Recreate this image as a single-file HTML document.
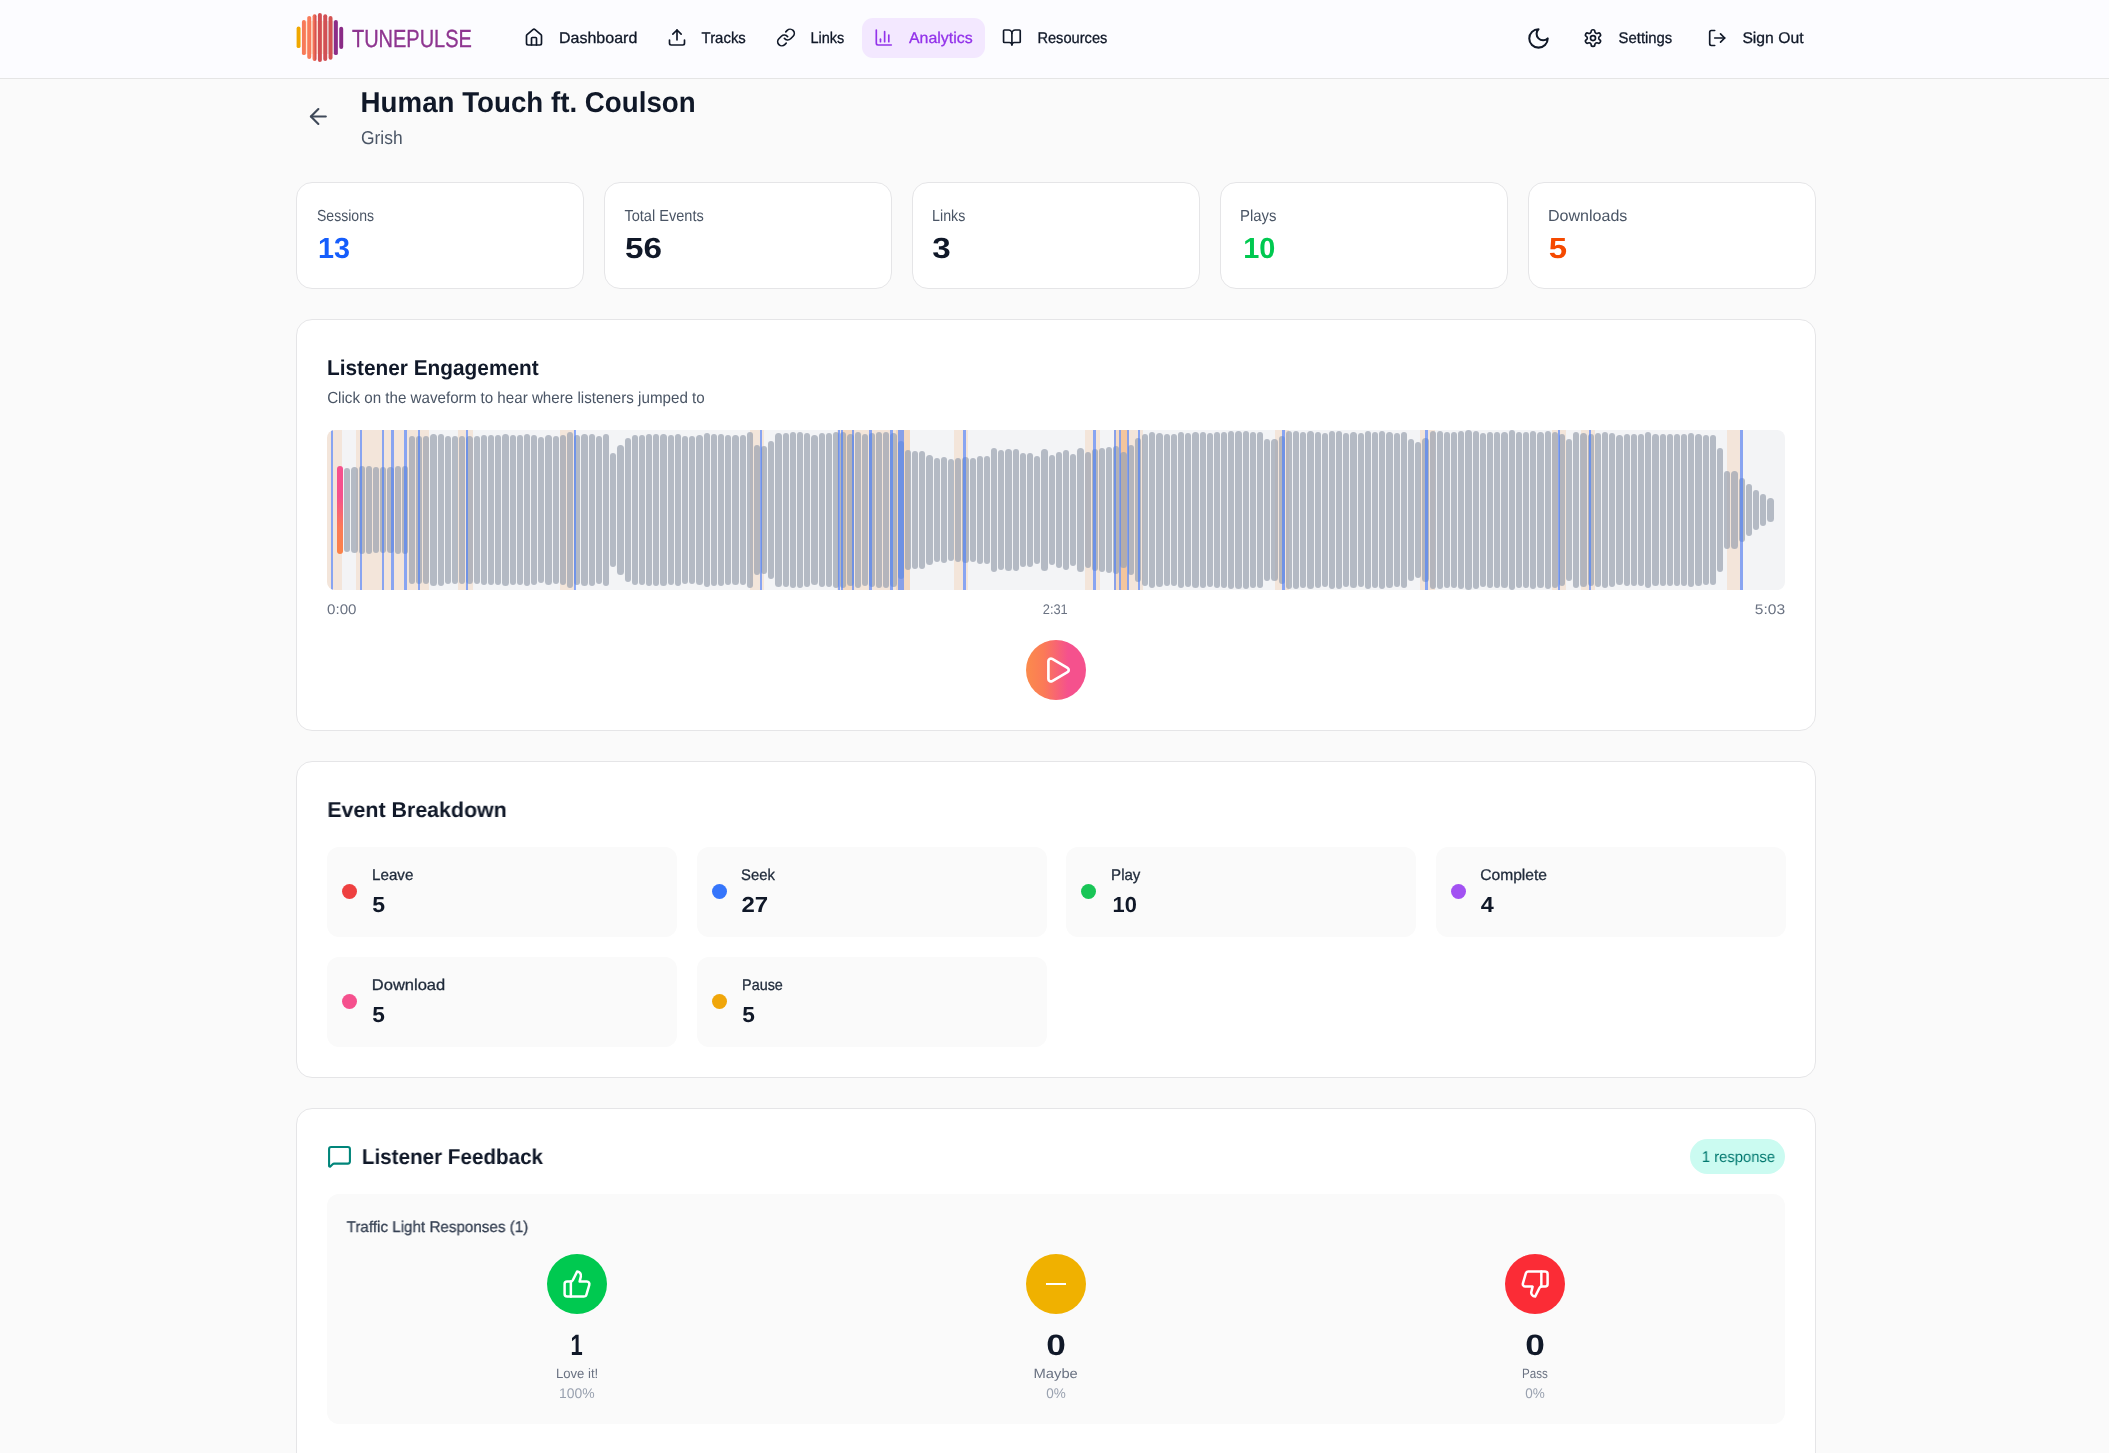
<!DOCTYPE html>
<html lang="en"><head><meta charset="utf-8"><title>TunePulse Analytics</title>
<style>
*{box-sizing:border-box;margin:0;padding:0}
html,body{width:2109px;height:1453px;overflow:hidden;background:#fafafa;font-family:"Liberation Sans",sans-serif}
.page{position:relative;width:2109px;height:1453px;overflow:hidden;will-change:transform}
.hdr{position:absolute;left:0;top:0;width:2109px;height:79px;background:#fcfcff;border-bottom:1px solid #e5e5e5}
.t{position:absolute;line-height:1;white-space:nowrap;text-rendering:geometricPrecision}
.ic{position:absolute;overflow:visible}

.pill{position:absolute;left:862px;top:18px;width:123px;height:40px;border-radius:11px;background:#f3e8ff}
.card{position:absolute;background:#fff;border:1px solid #e5e5e7;border-radius:16px}
.tile{position:absolute;background:#fafafa;border-radius:12px}
.dot{position:absolute;width:15px;height:15px;border-radius:50%}
.circ{position:absolute;width:60px;height:60px;border-radius:50%}
.wave{position:absolute;left:327px;top:430px;width:1458px;height:160px;background:#f3f4f6;border-radius:8px;overflow:hidden}
.bars{position:absolute;left:10px;top:0;width:1438px;height:160px;display:flex;align-items:center;gap:1px}
.bars b{flex:1;display:block;background:rgba(153,161,175,.7);border-radius:4px}
.bars b.p{background:linear-gradient(to top,#fb8248 0%,#fb7a57 30%,#f5518d 65%,#f5518d 100%)}
.wave u{position:absolute;top:0;height:160px;background:rgba(251,146,60,.15)}
.wave s{position:absolute;top:0;height:160px;background:rgba(70,125,255,.62)}
.playbtn{position:absolute;left:1026px;top:640px;width:60px;height:60px;border-radius:50%;background:linear-gradient(90deg,#fb8b4c 0%,#fb7a57 30%,#f5518d 70%,#f5518d 100%)}
.badge{position:absolute;left:1690px;top:1139px;width:95px;height:35px;border-radius:17.5px;background:#cbfbf1}
</style></head>
<body><div class="page">
<div class="hdr"></div>
<svg class="ic" style="left:290px;top:8px;width:60px;height:60px" viewBox="290 8 60 60"><defs><linearGradient id="lg4" x1="0" x2="1" y1="0" y2="0"><stop offset="0.35" stop-color="#f47558"/><stop offset="0.65" stop-color="#d65252"/></linearGradient></defs><rect x="304.5" y="21" width="25" height="33" rx="3" fill="#fde9d8"/><rect x="326.5" y="21" width="8.5" height="33" fill="#e6dfe2"/><rect x="296.60" y="26.6" width="3.95" height="21.5" rx="1.97" fill="#f0a800"/><rect x="301.93" y="20" width="3.95" height="35.1" rx="1.97" fill="#f77a58"/><rect x="307.26" y="15.9" width="3.95" height="43.1" rx="1.97" fill="#f97b59"/><rect x="312.59" y="14.2" width="3.95" height="46.7" rx="1.97" fill="url(#lg4)"/><rect x="317.92" y="13" width="3.95" height="48.9" rx="1.97" fill="#d24e52"/><rect x="323.25" y="14.2" width="3.95" height="46.7" rx="1.97" fill="#d25055"/><rect x="328.58" y="16.1" width="3.95" height="43.6" rx="1.97" fill="#d35252"/><rect x="333.91" y="20" width="3.95" height="35.1" rx="1.97" fill="#8c2d87"/><rect x="339.24" y="26.8" width="3.95" height="22.1" rx="1.97" fill="#8a2b86"/></svg>
<span class="t" id="brand" style="top:28.00px;font-size:24.7px;color:#8e3590;left:352px;transform-origin:0 50%;transform:translateX(-0.04px) scaleX(0.8091);-webkit-text-stroke:0.35px currentColor;">TUNEPULSE</span>
<div class="pill"></div>
<svg class="ic" style="left:524px;top:27px;width:20px;height:20px;transform:translate(0.00px,0.50px);color:#101828" viewBox="0 0 24 24" fill="none" stroke="currentColor" stroke-width="2" stroke-linecap="round" stroke-linejoin="round"><path d="M15 21v-8a1 1 0 0 0-1-1h-4a1 1 0 0 0-1 1v8"/><path d="M3 10a2 2 0 0 1 .709-1.528l7-5.999a2 2 0 0 1 2.582 0l7 5.999A2 2 0 0 1 21 10v9a2 2 0 0 1-2 2H5a2 2 0 0 1-2-2z"/></svg>
<span class="t" id="nav0" style="top:31.00px;font-size:15.5px;color:#101828;left:560px;transform-origin:0 50%;transform:translateX(-0.97px) scaleX(1.0319);-webkit-text-stroke:0.3px currentColor;">Dashboard</span>
<svg class="ic" style="left:667px;top:27px;width:20px;height:20px;transform:translate(0.00px,0.50px);color:#101828" viewBox="0 0 24 24" fill="none" stroke="currentColor" stroke-width="2" stroke-linecap="round" stroke-linejoin="round"><path d="M21 15v4a2 2 0 0 1-2 2H5a2 2 0 0 1-2-2v-4"/><polyline points="17 8 12 3 7 8"/><line x1="12" x2="12" y1="3" y2="15"/></svg>
<span class="t" id="nav1" style="top:31.00px;font-size:15.5px;color:#101828;left:702px;transform-origin:0 50%;transform:translateX(-0.43px) scaleX(0.9634);-webkit-text-stroke:0.3px currentColor;">Tracks</span>
<svg class="ic" style="left:776px;top:27px;width:20px;height:20px;transform:translate(0.00px,0.50px);color:#101828" viewBox="0 0 24 24" fill="none" stroke="currentColor" stroke-width="2" stroke-linecap="round" stroke-linejoin="round"><path d="M10 13a5 5 0 0 0 7.54.54l3-3a5 5 0 0 0-7.07-7.07l-1.72 1.71"/><path d="M14 11a5 5 0 0 0-7.54-.54l-3 3a5 5 0 0 0 7.07 7.07l1.71-1.71"/></svg>
<span class="t" id="nav2" style="top:31.00px;font-size:15.5px;color:#101828;left:811px;transform-origin:0 50%;transform:translateX(-0.57px) scaleX(0.9367);-webkit-text-stroke:0.3px currentColor;">Links</span>
<svg class="ic" style="left:873px;top:27px;width:20px;height:20px;transform:translate(0.80px,0.50px);color:#9333ea" viewBox="0 0 24 24" fill="none" stroke="currentColor" stroke-width="2" stroke-linecap="round" stroke-linejoin="round"><path d="M3 3v16a2 2 0 0 0 2 2h16"/><path d="M18 17V9"/><path d="M13 17V5"/><path d="M8 17v-3"/></svg>
<span class="t" id="nav3" style="top:31.00px;font-size:15.5px;color:#9333ea;left:909px;transform-origin:0 50%;transform:translateX(-0.02px) scaleX(1.0276);-webkit-text-stroke:0.3px currentColor;">Analytics</span>
<svg class="ic" style="left:1001px;top:27px;width:20px;height:20px;transform:translate(0.90px,0.50px);color:#101828" viewBox="0 0 24 24" fill="none" stroke="currentColor" stroke-width="2" stroke-linecap="round" stroke-linejoin="round"><path d="M12 7v14"/><path d="M3 18a1 1 0 0 1-1-1V4a1 1 0 0 1 1-1h5a4 4 0 0 1 4 4 4 4 0 0 1 4-4h5a1 1 0 0 1 1 1v13a1 1 0 0 1-1 1h-6a3 3 0 0 0-3 3 3 3 0 0 0-3-3z"/></svg>
<span class="t" id="nav4" style="top:31.00px;font-size:15.5px;color:#101828;left:1038px;transform-origin:0 50%;transform:translateX(-0.61px) scaleX(0.9448);-webkit-text-stroke:0.3px currentColor;">Resources</span>
<svg class="ic" style="left:1526px;top:26px;width:24.6px;height:24.6px;transform:translate(0.20px,0.10px);color:#101828" viewBox="0 0 24 24" fill="none" stroke="currentColor" stroke-width="2" stroke-linecap="round" stroke-linejoin="round"><path d="M12 3a6 6 0 0 0 9 9 9 9 0 1 1-9-9Z"/></svg>
<svg class="ic" style="left:1583px;top:28px;width:20px;height:20px;transform:translate(0.00px,0.10px);color:#101828" viewBox="0 0 24 24" fill="none" stroke="currentColor" stroke-width="2" stroke-linecap="round" stroke-linejoin="round"><path d="M12.22 2h-.44a2 2 0 0 0-2 2v.18a2 2 0 0 1-1 1.73l-.43.25a2 2 0 0 1-2 0l-.15-.08a2 2 0 0 0-2.73.73l-.22.38a2 2 0 0 0 .73 2.73l.15.1a2 2 0 0 1 1 1.72v.51a2 2 0 0 1-1 1.74l-.15.09a2 2 0 0 0-.73 2.73l.22.38a2 2 0 0 0 2.73.73l.15-.08a2 2 0 0 1 2 0l.43.25a2 2 0 0 1 1 1.73V20a2 2 0 0 0 2 2h.44a2 2 0 0 0 2-2v-.18a2 2 0 0 1 1-1.73l.43-.25a2 2 0 0 1 2 0l.15.08a2 2 0 0 0 2.73-.73l.22-.39a2 2 0 0 0-.73-2.73l-.15-.08a2 2 0 0 1-1-1.74v-.5a2 2 0 0 1 1-1.74l.15-.09a2 2 0 0 0 .73-2.73l-.22-.38a2 2 0 0 0-2.73-.73l-.15.08a2 2 0 0 1-2 0l-.43-.25a2 2 0 0 1-1-1.73V4a2 2 0 0 0-2-2z"/><circle cx="12" cy="12" r="3"/></svg>
<span class="t" id="set" style="top:31.00px;font-size:15.5px;color:#101828;left:1619px;transform-origin:0 50%;transform:translateX(-0.40px) scaleX(0.9585);-webkit-text-stroke:0.3px currentColor;">Settings</span>
<svg class="ic" style="left:1707px;top:28px;width:20px;height:20px;transform:translate(0.20px,0.00px);color:#101828" viewBox="0 0 24 24" fill="none" stroke="currentColor" stroke-width="2" stroke-linecap="round" stroke-linejoin="round"><path d="M9 21H5a2 2 0 0 1-2-2V5a2 2 0 0 1 2-2h4"/><polyline points="16 17 21 12 16 7"/><line x1="21" x2="9" y1="12" y2="12"/></svg>
<span class="t" id="so" style="top:31.00px;font-size:15.5px;color:#101828;left:1743px;transform-origin:0 50%;transform:translateX(-0.60px) scaleX(1.0129);-webkit-text-stroke:0.3px currentColor;">Sign Out</span>
<svg class="ic" style="left:305px;top:103px;width:25.5px;height:25.5px;transform:translate(0.60px,0.75px);color:#3f4959" viewBox="0 0 24 24" fill="none" stroke="currentColor" stroke-width="2" stroke-linecap="round" stroke-linejoin="round"><path d="m12 19-7-7 7-7"/><path d="M19 12H5"/></svg>
<span class="t" id="title" style="top:89.00px;font-size:28.8px;color:#101828;font-weight:700;left:362px;transform-origin:0 50%;transform:translateX(-1.41px) scaleX(0.9624);">Human Touch ft. Coulson</span>
<span class="t" id="artist" style="top:129.00px;font-size:18.7px;color:#4a5565;left:362px;transform-origin:0 50%;transform:translateX(-0.99px) scaleX(0.9317);">Grish</span>
<div class="card" style="left:296px;top:182px;width:288px;height:107px"></div>
<span class="t" id="cl0" style="top:209.00px;font-size:16px;color:#4a5565;left:317px;transform-origin:0 50%;transform:translateX(-0.03px) scaleX(0.8783);">Sessions</span>
<span class="t" id="cn0" style="top:235.00px;font-size:29.2px;color:#155dfc;font-weight:700;left:319px;transform-origin:0 50%;transform:translateX(-0.89px) scaleX(0.9854);">13</span>
<div class="card" style="left:604px;top:182px;width:288px;height:107px"></div>
<span class="t" id="cl1" style="top:209.00px;font-size:16px;color:#4a5565;left:624px;transform-origin:0 50%;transform:translateX(0.43px) scaleX(0.9104);">Total Events</span>
<span class="t" id="cn1" style="top:235.00px;font-size:29.2px;color:#101828;font-weight:700;left:626px;transform-origin:0 50%;transform:translateX(-0.93px) scaleX(1.1384);">56</span>
<div class="card" style="left:912px;top:182px;width:288px;height:107px"></div>
<span class="t" id="cl2" style="top:209.00px;font-size:16px;color:#4a5565;left:933px;transform-origin:0 50%;transform:translateX(-0.88px) scaleX(0.8882);">Links</span>
<span class="t" id="cn2" style="top:235.00px;font-size:29.2px;color:#101828;font-weight:700;left:933px;transform-origin:0 50%;transform:translateX(-0.84px) scaleX(1.1388);">3</span>
<div class="card" style="left:1220px;top:182px;width:288px;height:107px"></div>
<span class="t" id="cl3" style="top:209.00px;font-size:16px;color:#4a5565;left:1241px;transform-origin:0 50%;transform:translateX(-1.02px) scaleX(0.9319);">Plays</span>
<span class="t" id="cn3" style="top:235.00px;font-size:29.2px;color:#00c950;font-weight:700;left:1245px;transform-origin:0 50%;transform:translateX(-1.79px) scaleX(0.9896);">10</span>
<div class="card" style="left:1528px;top:182px;width:288px;height:107px"></div>
<span class="t" id="cl4" style="top:209.00px;font-size:16px;color:#4a5565;left:1549px;transform-origin:0 50%;transform:translateX(-0.95px) scaleX(1.0017);">Downloads</span>
<span class="t" id="cn4" style="top:235.00px;font-size:29.2px;color:#f54900;font-weight:700;left:1549px;transform-origin:0 50%;transform:translateX(-0.22px) scaleX(1.1278);">5</span>
<div class="card" style="left:296px;top:319px;width:1520px;height:412px"></div>
<span class="t" id="le" style="top:358.00px;font-size:21.5px;color:#101828;font-weight:700;left:328px;transform-origin:0 50%;transform:translateX(-1.07px) scaleX(0.9682);">Listener Engagement</span>
<span class="t" id="les" style="top:391.00px;font-size:16px;color:#4a5565;left:328px;transform-origin:0 50%;transform:translateX(-0.86px) scaleX(0.9476);">Click on the waveform to hear where listeners jumped to</span>
<div class="wave">
<u style="left:0.1px;width:14.9px"></u>
<u style="left:29.0px;width:72.8px"></u>
<u style="left:131.0px;width:15.0px"></u>
<u style="left:233.0px;width:14.6px"></u>
<u style="left:423.0px;width:13.9px"></u>
<u style="left:510.3px;width:72.6px"></u>
<u style="left:516.0px;width:11.0px"></u>
<u style="left:568.6px;width:14.3px"></u>
<u style="left:627.0px;width:13.9px"></u>
<u style="left:757.8px;width:15.0px"></u>
<u style="left:787.0px;width:28.9px"></u>
<u style="left:787.0px;width:15.0px"></u>
<u style="left:793.8px;width:6.7px"></u>
<u style="left:793.8px;width:6.7px"></u>
<u style="left:947.9px;width:13.8px"></u>
<u style="left:1093.0px;width:14.5px"></u>
<u style="left:1225.2px;width:13.6px"></u>
<u style="left:1253.8px;width:14.0px"></u>
<u style="left:1400.1px;width:15.9px"></u>
<div class="bars">
<b class="p" style="height:88.1px"></b>
<b style="height:84.7px"></b>
<b style="height:86.1px"></b>
<b style="height:88.1px"></b>
<b style="height:88.1px"></b>
<b style="height:86.1px"></b>
<b style="height:86.1px"></b>
<b style="height:86.1px"></b>
<b style="height:88.1px"></b>
<b style="height:88.1px"></b>
<b style="height:147.8px"></b>
<b style="height:147.8px"></b>
<b style="height:147.8px"></b>
<b style="height:152.1px"></b>
<b style="height:152.1px"></b>
<b style="height:147.8px"></b>
<b style="height:147.8px"></b>
<b style="height:147.8px"></b>
<b style="height:147.8px"></b>
<b style="height:147.8px"></b>
<b style="height:150.1px"></b>
<b style="height:150.1px"></b>
<b style="height:150.1px"></b>
<b style="height:152.1px"></b>
<b style="height:150.1px"></b>
<b style="height:150.1px"></b>
<b style="height:152.1px"></b>
<b style="height:150.1px"></b>
<b style="height:145.8px"></b>
<b style="height:150.1px"></b>
<b style="height:147.8px"></b>
<b style="height:150.1px"></b>
<b style="height:155.8px"></b>
<b style="height:150.1px"></b>
<b style="height:152.1px"></b>
<b style="height:152.1px"></b>
<b style="height:147.8px"></b>
<b style="height:152.1px"></b>
<b style="height:114.5px"></b>
<b style="height:130.2px"></b>
<b style="height:144.4px"></b>
<b style="height:150.1px"></b>
<b style="height:150.1px"></b>
<b style="height:152.1px"></b>
<b style="height:152.1px"></b>
<b style="height:152.1px"></b>
<b style="height:150.1px"></b>
<b style="height:152.1px"></b>
<b style="height:147.8px"></b>
<b style="height:147.8px"></b>
<b style="height:150.1px"></b>
<b style="height:154.4px"></b>
<b style="height:152.1px"></b>
<b style="height:152.1px"></b>
<b style="height:150.1px"></b>
<b style="height:150.1px"></b>
<b style="height:150.1px"></b>
<b style="height:155.8px"></b>
<b style="height:130.2px"></b>
<b style="height:127.9px"></b>
<b style="height:138.2px"></b>
<b style="height:154.4px"></b>
<b style="height:154.4px"></b>
<b style="height:156.4px"></b>
<b style="height:156.4px"></b>
<b style="height:154.4px"></b>
<b style="height:150.1px"></b>
<b style="height:154.4px"></b>
<b style="height:154.4px"></b>
<b style="height:156.4px"></b>
<b style="height:156.4px"></b>
<b style="height:152.1px"></b>
<b style="height:156.4px"></b>
<b style="height:152.1px"></b>
<b style="height:154.4px"></b>
<b style="height:156.4px"></b>
<b style="height:156.4px"></b>
<b style="height:154.4px"></b>
<b style="height:138.7px"></b>
<b style="height:120.2px"></b>
<b style="height:118.2px"></b>
<b style="height:118.2px"></b>
<b style="height:110.3px"></b>
<b style="height:104.6px"></b>
<b style="height:106.0px"></b>
<b style="height:101.7px"></b>
<b style="height:104.6px"></b>
<b style="height:106.0px"></b>
<b style="height:104.6px"></b>
<b style="height:108.0px"></b>
<b style="height:108.0px"></b>
<b style="height:124.5px"></b>
<b style="height:120.2px"></b>
<b style="height:122.2px"></b>
<b style="height:122.2px"></b>
<b style="height:114.5px"></b>
<b style="height:114.5px"></b>
<b style="height:108.0px"></b>
<b style="height:122.2px"></b>
<b style="height:110.3px"></b>
<b style="height:116.0px"></b>
<b style="height:120.2px"></b>
<b style="height:112.3px"></b>
<b style="height:124.5px"></b>
<b style="height:116.0px"></b>
<b style="height:122.2px"></b>
<b style="height:124.5px"></b>
<b style="height:125.9px"></b>
<b style="height:127.9px"></b>
<b style="height:116.0px"></b>
<b style="height:130.2px"></b>
<b style="height:144.4px"></b>
<b style="height:152.1px"></b>
<b style="height:156.4px"></b>
<b style="height:154.4px"></b>
<b style="height:152.1px"></b>
<b style="height:152.1px"></b>
<b style="height:156.4px"></b>
<b style="height:154.4px"></b>
<b style="height:156.4px"></b>
<b style="height:156.4px"></b>
<b style="height:154.4px"></b>
<b style="height:156.4px"></b>
<b style="height:156.4px"></b>
<b style="height:158.6px"></b>
<b style="height:158.6px"></b>
<b style="height:158.6px"></b>
<b style="height:156.4px"></b>
<b style="height:156.4px"></b>
<b style="height:142.1px"></b>
<b style="height:142.1px"></b>
<b style="height:148.7px"></b>
<b style="height:158.6px"></b>
<b style="height:158.6px"></b>
<b style="height:156.4px"></b>
<b style="height:158.6px"></b>
<b style="height:156.4px"></b>
<b style="height:154.4px"></b>
<b style="height:158.6px"></b>
<b style="height:158.6px"></b>
<b style="height:154.4px"></b>
<b style="height:156.4px"></b>
<b style="height:154.4px"></b>
<b style="height:158.6px"></b>
<b style="height:156.4px"></b>
<b style="height:158.6px"></b>
<b style="height:156.4px"></b>
<b style="height:154.4px"></b>
<b style="height:156.4px"></b>
<b style="height:142.1px"></b>
<b style="height:136.4px"></b>
<b style="height:144.4px"></b>
<b style="height:158.6px"></b>
<b style="height:158.6px"></b>
<b style="height:155.7px"></b>
<b style="height:155.7px"></b>
<b style="height:158.1px"></b>
<b style="height:160px"></b>
<b style="height:158.1px"></b>
<b style="height:153.6px"></b>
<b style="height:155.7px"></b>
<b style="height:155.7px"></b>
<b style="height:155.7px"></b>
<b style="height:159.8px"></b>
<b style="height:155.7px"></b>
<b style="height:155.7px"></b>
<b style="height:158.1px"></b>
<b style="height:155.7px"></b>
<b style="height:158.1px"></b>
<b style="height:155.7px"></b>
<b style="height:151.2px"></b>
<b style="height:142.0px"></b>
<b style="height:155.7px"></b>
<b style="height:153.6px"></b>
<b style="height:151.2px"></b>
<b style="height:153.6px"></b>
<b style="height:155.7px"></b>
<b style="height:153.6px"></b>
<b style="height:149.5px"></b>
<b style="height:151.2px"></b>
<b style="height:151.2px"></b>
<b style="height:151.2px"></b>
<b style="height:155.7px"></b>
<b style="height:151.2px"></b>
<b style="height:151.2px"></b>
<b style="height:151.2px"></b>
<b style="height:151.2px"></b>
<b style="height:151.2px"></b>
<b style="height:153.6px"></b>
<b style="height:151.2px"></b>
<b style="height:149.5px"></b>
<b style="height:149.5px"></b>
<b style="height:123.9px"></b>
<b style="height:77.8px"></b>
<b style="height:77.8px"></b>
<b style="height:64.2px"></b>
<b style="height:51.6px"></b>
<b style="height:39.6px"></b>
<b style="height:31.8px"></b>
<b style="height:23.9px"></b>
</div>
<s style="left:4.1px;width:2px"></s>
<s style="left:33.0px;width:2px"></s>
<s style="left:55.0px;width:2px"></s>
<s style="left:64.0px;width:3px"></s>
<s style="left:76.8px;width:3px"></s>
<s style="left:91.0px;width:2px"></s>
<s style="left:139.0px;width:2px"></s>
<s style="left:247.0px;width:2px"></s>
<s style="left:432.9px;width:2px"></s>
<s style="left:511.0px;width:2px"></s>
<s style="left:513.8px;width:2px"></s>
<s style="left:525.0px;width:2px"></s>
<s style="left:541.8px;width:3px"></s>
<s style="left:562.8px;width:3px"></s>
<s style="left:571.2px;width:2px"></s>
<s style="left:573.0px;width:2px"></s>
<s style="left:574.9px;width:2px"></s>
<s style="left:636.0px;width:3px"></s>
<s style="left:765.9px;width:3px"></s>
<s style="left:787.4px;width:2px"></s>
<s style="left:791.7px;width:2px"></s>
<s style="left:800.2px;width:2px"></s>
<s style="left:810.9px;width:2px"></s>
<s style="left:955.0px;width:3px"></s>
<s style="left:1097.9px;width:3px"></s>
<s style="left:1231.0px;width:2px"></s>
<s style="left:1261.9px;width:2px"></s>
<s style="left:1413.0px;width:3px"></s>
</div>
<span class="t" id="t0" style="top:602.00px;font-size:14px;color:#6a7282;left:327px;transform-origin:0 50%;transform:translateX(0.11px) scaleX(1.0792);">0:00</span>
<span class="t" id="t1" style="top:602.00px;font-size:14px;color:#6a7282;left:1055px;transform:translateX(calc(-50% + 0.24px)) scaleX(0.9180);">2:31</span>
<span class="t" id="t2" style="top:602.00px;font-size:14px;color:#6a7282;left:1784px;transform-origin:100% 50%;transform:translateX(calc(-100% + 1.16px)) scaleX(1.1137);">5:03</span>
<div class="playbtn"></div>
<svg class="ic" style="left:1042px;top:654px;width:30.5px;height:30.5px;transform:translate(0.05px,0.75px);color:#fff" viewBox="0 0 24 24" fill="none" stroke="currentColor" stroke-width="2.1" stroke-linecap="round" stroke-linejoin="round"><path d="M5 5a2 2 0 0 1 3.008-1.728l11.997 6.998a2 2 0 0 1 .003 3.458l-12 7A2 2 0 0 1 5 19z"/></svg>
<div class="card" style="left:296px;top:761px;width:1520px;height:317px"></div>
<span class="t" id="eb" style="top:800.00px;font-size:21.5px;color:#101828;font-weight:700;left:328px;transform-origin:0 50%;transform:translateX(-0.66px) scaleX(0.9944);">Event Breakdown</span>
<div class="tile" style="left:327px;top:847px;width:349.5px;height:90px"></div>
<div class="dot" style="left:342px;top:884px;background:#ee4040"></div>
<span class="t" id="tl0" style="top:868.00px;font-size:15.5px;color:#1e2939;left:373px;transform-origin:0 50%;transform:translateX(-0.98px) scaleX(0.9784);-webkit-text-stroke:0.3px currentColor;">Leave</span>
<span class="t" id="tn0" style="top:894.00px;font-size:21.7px;color:#101828;font-weight:700;left:373px;transform-origin:0 50%;transform:translateX(-0.77px) scaleX(1.0633);">5</span>
<div class="tile" style="left:697px;top:847px;width:349.5px;height:90px"></div>
<div class="dot" style="left:712px;top:884px;background:#3575fb"></div>
<span class="t" id="tl1" style="top:868.00px;font-size:15.5px;color:#1e2939;left:742px;transform-origin:0 50%;transform:translateX(-0.90px) scaleX(0.9562);-webkit-text-stroke:0.3px currentColor;">Seek</span>
<span class="t" id="tn1" style="top:894.00px;font-size:21.7px;color:#101828;font-weight:700;left:742px;transform-origin:0 50%;transform:translateX(-0.48px) scaleX(1.1062);">27</span>
<div class="tile" style="left:1066px;top:847px;width:349.5px;height:90px"></div>
<div class="dot" style="left:1081px;top:884px;background:#18c556"></div>
<span class="t" id="tl2" style="top:868.00px;font-size:15.5px;color:#1e2939;left:1112px;transform-origin:0 50%;transform:translateX(-0.90px) scaleX(0.9716);-webkit-text-stroke:0.3px currentColor;">Play</span>
<span class="t" id="tn2" style="top:894.00px;font-size:21.7px;color:#101828;font-weight:700;left:1114px;transform-origin:0 50%;transform:translateX(-1.48px) scaleX(1.0071);">10</span>
<div class="tile" style="left:1436px;top:847px;width:349.5px;height:90px"></div>
<div class="dot" style="left:1451px;top:884px;background:#a251f2"></div>
<span class="t" id="tl3" style="top:868.00px;font-size:15.5px;color:#1e2939;left:1481px;transform-origin:0 50%;transform:translateX(-0.76px) scaleX(1.0059);-webkit-text-stroke:0.3px currentColor;">Complete</span>
<span class="t" id="tn3" style="top:894.00px;font-size:21.7px;color:#101828;font-weight:700;left:1481px;transform-origin:0 50%;transform:translateX(-0.37px) scaleX(1.0795);">4</span>
<div class="tile" style="left:327px;top:957px;width:349.5px;height:90px"></div>
<div class="dot" style="left:342px;top:994px;background:#f5508d"></div>
<span class="t" id="tl4" style="top:978.00px;font-size:15.5px;color:#1e2939;left:373px;transform-origin:0 50%;transform:translateX(-1.23px) scaleX(1.0652);-webkit-text-stroke:0.3px currentColor;">Download</span>
<span class="t" id="tn4" style="top:1004.00px;font-size:21.7px;color:#101828;font-weight:700;left:373px;transform-origin:0 50%;transform:translateX(-0.68px) scaleX(1.0469);">5</span>
<div class="tile" style="left:697px;top:957px;width:349.5px;height:90px"></div>
<div class="dot" style="left:712px;top:994px;background:#f0a60a"></div>
<span class="t" id="tl5" style="top:978.00px;font-size:15.5px;color:#1e2939;left:743px;transform-origin:0 50%;transform:translateX(-0.94px) scaleX(0.9275);-webkit-text-stroke:0.3px currentColor;">Pause</span>
<span class="t" id="tn5" style="top:1004.00px;font-size:21.7px;color:#101828;font-weight:700;left:743px;transform-origin:0 50%;transform:translateX(-0.68px) scaleX(1.0469);">5</span>
<div class="card" style="left:296px;top:1108px;width:1520px;height:420px"></div>
<svg class="ic" style="left:327px;top:1143px;width:25px;height:25px;transform:translate(0.00px,0.80px);color:#00857a" viewBox="0 0 24 24" fill="none" stroke="currentColor" stroke-width="2" stroke-linecap="round" stroke-linejoin="round"><path d="M22 17a2 2 0 0 1-2 2H6.828a2 2 0 0 0-1.414.586l-2.202 2.202A.71.71 0 0 1 2 21.286V5a2 2 0 0 1 2-2h16a2 2 0 0 1 2 2z"/></svg>
<span class="t" id="lf" style="top:1147.00px;font-size:21.5px;color:#101828;font-weight:700;left:363px;transform-origin:0 50%;transform:translateX(-1.15px) scaleX(0.9594);">Listener Feedback</span>
<div class="badge"></div>
<span class="t" id="bd" style="top:1150.00px;font-size:15.5px;color:#00786f;left:1702px;transform-origin:0 50%;transform:translateX(-0.21px) scaleX(0.9558);">1 response</span>
<div class="tile" style="left:327px;top:1194px;width:1458px;height:230px"></div>
<span class="t" id="tlr" style="top:1220.00px;font-size:15.5px;color:#364153;left:347px;transform-origin:0 50%;transform:translateX(-0.42px) scaleX(0.9811);-webkit-text-stroke:0.3px currentColor;">Traffic Light Responses (1)</span>
<div class="circ" style="left:547px;top:1254px;background:#00c950"></div>
<svg class="ic" style="left:562px;top:1269px;width:30px;height:30px;transform:translate(0.10px,0.10px);color:#fff" viewBox="0 0 24 24" fill="none" stroke="currentColor" stroke-width="2" stroke-linecap="round" stroke-linejoin="round"><path d="M7 10v12"/><path d="M15 5.88 14 10h5.83a2 2 0 0 1 1.92 2.56l-2.33 8A2 2 0 0 1 17.5 22H4a2 2 0 0 1-2-2v-8a2 2 0 0 1 2-2h2.76a2 2 0 0 0 1.79-1.11L12 2a3.13 3.13 0 0 1 3 3.88Z"/></svg>
<span class="t" id="fn0" style="top:1331.00px;font-size:29.5px;color:#101828;font-weight:700;left:577px;transform:translateX(calc(-50% + -0.33px)) scaleX(0.7434);">1</span>
<span class="t" id="fl0" style="top:1367.00px;font-size:13.5px;color:#6a7282;left:577px;transform:translateX(calc(-50% + 0.07px)) scaleX(0.9736);">Love it!</span>
<span class="t" id="fp0" style="top:1386.00px;font-size:14px;color:#99a1af;left:577px;transform:translateX(calc(-50% + -0.27px)) scaleX(0.9943);">100%</span>
<div class="circ" style="left:1026px;top:1254px;background:#f0b100"></div>
<div style="position:absolute;left:1046px;top:1283px;width:20px;height:2px;background:#fff"></div>
<span class="t" id="fn1" style="top:1331.00px;font-size:29.5px;color:#101828;font-weight:700;left:1056px;transform:translateX(calc(-50% + 0.01px)) scaleX(1.1947);">0</span>
<span class="t" id="fl1" style="top:1367.00px;font-size:13.5px;color:#6a7282;left:1056px;transform:translateX(calc(-50% + -0.33px)) scaleX(1.0928);">Maybe</span>
<span class="t" id="fp1" style="top:1386.00px;font-size:14px;color:#99a1af;left:1056px;transform:translateX(calc(-50% + -0.01px)) scaleX(0.9647);">0%</span>
<div class="circ" style="left:1505px;top:1254px;background:#fb2c36"></div>
<svg class="ic" style="left:1520px;top:1269px;width:30px;height:30px;transform:translate(0.10px,0.10px);color:#fff" viewBox="0 0 24 24" fill="none" stroke="currentColor" stroke-width="2" stroke-linecap="round" stroke-linejoin="round"><path d="M17 14V2"/><path d="M9 18.12 10 14H4.17a2 2 0 0 1-1.92-2.56l2.33-8A2 2 0 0 1 6.5 2H20a2 2 0 0 1 2 2v8a2 2 0 0 1-2 2h-2.76a2 2 0 0 0-1.79 1.11L12 22a3.13 3.13 0 0 1-3-3.88Z"/></svg>
<span class="t" id="fn2" style="top:1331.00px;font-size:29.5px;color:#101828;font-weight:700;left:1535px;transform:translateX(calc(-50% + 0.01px)) scaleX(1.1947);">0</span>
<span class="t" id="fl2" style="top:1367.00px;font-size:13.5px;color:#6a7282;left:1535px;transform:translateX(calc(-50% + -0.10px)) scaleX(0.8599);">Pass</span>
<span class="t" id="fp2" style="top:1386.00px;font-size:14px;color:#99a1af;left:1535px;transform:translateX(calc(-50% + -0.01px)) scaleX(0.9647);">0%</span>
</div></body></html>
